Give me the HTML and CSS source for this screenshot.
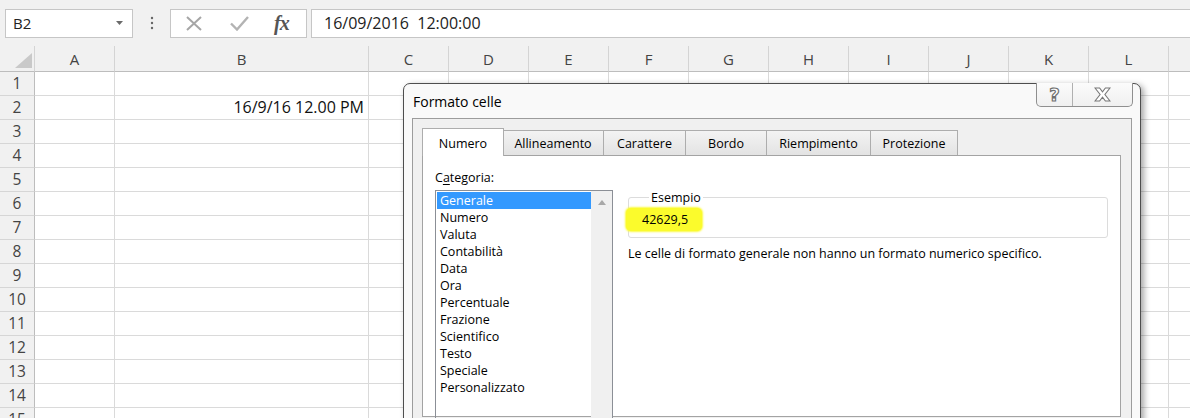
FILE: index.html
```html
<!DOCTYPE html>
<html lang="it">
  <head>
    <meta charset="UTF-8" />
    <title>Formato celle</title>
    <link rel="stylesheet" href="styles.css">
  </head>
  <body>
    <!-- Formula bar -->
    <div class="formula-bar">
      <div class="name-box">
        <span>B2</span>
        <svg class="caret" width="7" height="4" viewBox="0 0 7 4"><path d="M0 0h7L3.5 4z" fill="#6a6a6a"/></svg>
      </div>
      <svg class="grip" width="4" height="14" viewBox="0 0 4 14">
        <circle cx="2" cy="2" r="1.2" fill="#666"/>
        <circle cx="2" cy="7" r="1.2" fill="#666"/>
        <circle cx="2" cy="12" r="1.2" fill="#666"/>
      </svg>
      <div class="fx-buttons">
        <svg class="icon-cancel" width="18" height="15" viewBox="0 0 18 15"><path d="M2 1l14 13M16 1L2 14" stroke="#a6a6a6" stroke-width="2" fill="none"/></svg>
        <svg class="icon-enter" width="19" height="15" viewBox="0 0 19 15"><path d="M1 7.5l6 6L18 1" stroke="#b3b3b3" stroke-width="2.4" fill="none"/></svg>
        <span class="fx">fx</span>
      </div>
      <div class="formula-input">16/09/2016  12:00:00</div>
    </div>

    <!-- Worksheet -->
    <div class="sheet">
      <div class="corner"><span class="corner-tri"></span></div>
      <div class="ch">A</div><div class="ch">B</div><div class="ch">C</div><div class="ch">D</div><div class="ch">E</div><div class="ch">F</div><div class="ch">G</div><div class="ch">H</div><div class="ch">I</div><div class="ch">J</div><div class="ch">K</div><div class="ch">L</div><div class="ch"></div>

      <div class="rh">1</div><i></i><i></i><i></i><i></i><i></i><i></i><i></i><i></i><i></i><i></i><i></i><i></i><i></i>
      <div class="rh">2</div><i></i><i class="value">16/9/16 12.00 PM</i><i></i><i></i><i></i><i></i><i></i><i></i><i></i><i></i><i></i><i></i><i></i>
      <div class="rh">3</div><i></i><i></i><i></i><i></i><i></i><i></i><i></i><i></i><i></i><i></i><i></i><i></i><i></i>
      <div class="rh">4</div><i></i><i></i><i></i><i></i><i></i><i></i><i></i><i></i><i></i><i></i><i></i><i></i><i></i>
      <div class="rh">5</div><i></i><i></i><i></i><i></i><i></i><i></i><i></i><i></i><i></i><i></i><i></i><i></i><i></i>
      <div class="rh">6</div><i></i><i></i><i></i><i></i><i></i><i></i><i></i><i></i><i></i><i></i><i></i><i></i><i></i>
      <div class="rh">7</div><i></i><i></i><i></i><i></i><i></i><i></i><i></i><i></i><i></i><i></i><i></i><i></i><i></i>
      <div class="rh">8</div><i></i><i></i><i></i><i></i><i></i><i></i><i></i><i></i><i></i><i></i><i></i><i></i><i></i>
      <div class="rh">9</div><i></i><i></i><i></i><i></i><i></i><i></i><i></i><i></i><i></i><i></i><i></i><i></i><i></i>
      <div class="rh">10</div><i></i><i></i><i></i><i></i><i></i><i></i><i></i><i></i><i></i><i></i><i></i><i></i><i></i>
      <div class="rh">11</div><i></i><i></i><i></i><i></i><i></i><i></i><i></i><i></i><i></i><i></i><i></i><i></i><i></i>
      <div class="rh">12</div><i></i><i></i><i></i><i></i><i></i><i></i><i></i><i></i><i></i><i></i><i></i><i></i><i></i>
      <div class="rh">13</div><i></i><i></i><i></i><i></i><i></i><i></i><i></i><i></i><i></i><i></i><i></i><i></i><i></i>
      <div class="rh">14</div><i></i><i></i><i></i><i></i><i></i><i></i><i></i><i></i><i></i><i></i><i></i><i></i><i></i>
      <div class="rh">15</div><i></i><i></i><i></i><i></i><i></i><i></i><i></i><i></i><i></i><i></i><i></i><i></i><i></i>
    </div>

    <!-- Format cells dialog -->
    <div class="dialog">
      <div class="dialog-title">
        <span>Formato celle</span>
        <div class="caption-buttons">
          <div class="cap-btn help">?</div>
          <div class="cap-btn close">
            <svg width="17" height="15" viewBox="0 0 17 15"><path d="M1 1h4.6l2.9 3.8L11.4 1H16l-5.1 6.5L16 14h-4.6l-2.9-3.8L5.6 14H1l5.1-6.5z" fill="#fff" stroke="#777" stroke-width="1.1"/></svg>
          </div>
        </div>
      </div>

      <div class="dialog-body">
        <div class="tabs">
          <div class="tab active" style="width: 82px">Numero</div>
          <div class="tab" style="width: 101px">Allineamento</div>
          <div class="tab" style="width: 83px">Carattere</div>
          <div class="tab" style="width: 82px">Bordo</div>
          <div class="tab" style="width: 105px">Riempimento</div>
          <div class="tab" style="width: 88px">Protezione</div>
        </div>

        <div class="tab-page">
          <div class="category-col">
            <div class="field-label">C<u>a</u>tegoria:</div>
            <div class="listbox">
              <ul class="list-items">
                <li class="selected">Generale</li>
                <li>Numero</li>
                <li>Valuta</li>
                <li>Contabilità</li>
                <li>Data</li>
                <li>Ora</li>
                <li>Percentuale</li>
                <li>Frazione</li>
                <li>Scientifico</li>
                <li>Testo</li>
                <li>Speciale</li>
                <li>Personalizzato</li>
              </ul>
              <div class="scrollbar">
                <svg width="8" height="5" viewBox="0 0 8 5"><path d="M0 5h8L4 0z" fill="#a8a8a8"/></svg>
              </div>
            </div>
          </div>

          <div class="detail-col">
            <fieldset class="sample">
              <legend>Esempio</legend>
              <span class="sample-value">42629,5</span>
            </fieldset>
            <p class="hint">Le celle di formato generale non hanno un formato numerico specifico.</p>
          </div>
        </div>
      </div>
    </div>
  </body>
</html>
```

FILE: styles.css
```css
body {
  margin: 0;
  width: 1190px;
  height: 418px;
  overflow: hidden;
  position: relative;
  background-color: #fff;
  font-family: "Open Sans", "Noto Sans", sans-serif;
  color: #000;
}

/* Formula bar */
.formula-bar {
  display: flex;
  align-items: center;
  height: 46px;
  padding: 0 0 0 5px;
  box-sizing: border-box;
  background-color: #f1f1f1;
}

.name-box {
  width: 128px;
  height: 29px;
  box-sizing: border-box;
  border: 1px solid #c6c6c6;
  background: #fff;
  display: flex;
  align-items: center;
  justify-content: space-between;
  padding: 0 9px 0 7px;
  font-size: 15px;
  color: #222;
}

.grip {
  margin: 0 16px 0 17px;
}

.fx-buttons {
  width: 137px;
  height: 29px;
  box-sizing: border-box;
  border: 1px solid #c6c6c6;
  background: #fff;
  display: flex;
  align-items: center;
  padding-left: 14px;
}
.icon-enter {
  margin-left: 27px;
}
.fx {
  margin-left: 25px;
  font-family: "Liberation Serif", serif;
  font-style: italic;
  font-weight: bold;
  font-size: 20px;
  color: #555;
  letter-spacing: -1px;
}

.formula-input {
  flex: 1;
  height: 29px;
  box-sizing: border-box;
  margin-left: 4px;
  border: 1px solid #c6c6c6;
  border-right: none;
  background: #fff;
  padding-left: 12px;
  font-size: 16px;
  line-height: 27px;
  color: #222;
  white-space: pre;
}

/* Worksheet grid */
.sheet {
  display: grid;
  grid-template-columns: 35px 80px 254px repeat(11, 80px);
  grid-template-rows: 26px;
  grid-auto-rows: 24px;
}

.corner,
.ch {
  background-color: #f1f1f1;
  border-bottom: 1px solid #bdbdbd;
  border-right: 1px solid #d4d4d4;
}
.corner {
  display: flex;
  justify-content: flex-end;
  align-items: flex-end;
  padding: 0 2px 3px 0;
}
.corner-tri {
  width: 0;
  height: 0;
  border-left: 17px solid transparent;
  border-bottom: 15px solid #c9c9c9;
}
.ch {
  text-align: center;
  font-size: 15px;
  line-height: 26px;
  color: #444;
}

.rh {
  background-color: #f1f1f1;
  border-right: 1px solid #bdbdbd;
  border-bottom: 1px solid #d6d6d6;
  text-align: center;
  font-size: 15.5px;
  line-height: 23px;
  color: #444;
}

.sheet i {
  display: block;
  border-right: 1px solid #dadada;
  border-bottom: 1px solid #dadada;
  font-style: normal;
}
.sheet i.value {
  text-align: right;
  padding-right: 4px;
  font-size: 16px;
  line-height: 23px;
  color: #111;
}

/* Dialog */
.dialog {
  position: absolute;
  left: 403px;
  top: 83px;
  width: 738px;
  height: 380px;
  box-sizing: border-box;
  border: 1px solid #4e4e4e;
  border-radius: 7px 7px 0 0;
  background-color: #f9f9f9;
  padding: 0 8px;
  box-shadow: 3px 2px 6px rgba(0, 0, 0, 0.35);
  font-size: 12.5px;
}

.dialog-title {
  display: flex;
  height: 34px;
  align-items: flex-start;
}
.dialog-title span {
  font-size: 14px;
  margin: 8px 0 0 1px;
}

.caption-buttons {
  margin: -1px -1px 0 auto;
  display: flex;
  height: 24px;
  box-sizing: border-box;
  border: 1px solid #8f8f8f;
  border-top: none;
  border-radius: 0 0 5px 5px;
  background: linear-gradient(#fbfbfb, #f0f0f0);
}
.cap-btn {
  display: flex;
  align-items: center;
  justify-content: center;
}
.cap-btn.help {
  width: 35px;
  border-right: 1px solid #b0b0b0;
  font-family: "DejaVu Sans", sans-serif;
  font-weight: bold;
  font-size: 18px;
  color: #fff;
  -webkit-text-stroke: 1.2px #707070;
}
.cap-btn.close {
  width: 59px;
}

.dialog-body {
  height: 300px;
  border: 1px solid #9c9c9c;
  border-bottom: none;
  background-color: #f0f0f0;
  padding: 9px 10px 0 9px;
}

.tabs {
  display: flex;
  align-items: flex-end;
  height: 27px;
  position: relative;
  z-index: 1;
}
.tab {
  height: 25px;
  box-sizing: border-box;
  border: 1px solid #adadad;
  border-bottom: none;
  margin-left: -1px;
  background: linear-gradient(#f3f3f3, #e3e3e3);
  text-align: center;
  line-height: 26px;
  color: #000;
}
.tab:first-child {
  margin-left: 0;
}
.tab.active {
  height: 28px;
  margin-bottom: -1px;
  background: #fff;
  line-height: 29px;
  position: relative;
  z-index: 2;
}
.tab.active + .tab {
  border-left: none;
}

.tab-page {
  height: 260px;
  border: 1px solid #a3a3a3;
  background-color: #fff;
  display: flex;
}

.category-col {
  margin-left: 12px;
  width: 178px;
}
.field-label {
  margin-top: 13px;
  line-height: 17px;
}
.field-label u {
  text-underline-offset: 2px;
}

.listbox {
  margin-top: 4px;
  height: 240px;
  border: 1px solid #8b8f96;
  padding: 1px 0 0 1px;
  display: flex;
}
.list-items {
  list-style: none;
  margin: 0;
  padding: 0;
  width: 154px;
}
.list-items li {
  line-height: 17px;
  padding-left: 3px;
}
.list-items li.selected {
  background-color: #3399ff;
  color: #fff;
}
.scrollbar {
  flex: 1;
  margin-top: -1px;
  background-color: #f0f0f0;
  display: flex;
  justify-content: center;
  padding-top: 9px;
  align-items: flex-start;
}

.detail-col {
  margin-left: 13px;
}
.sample {
  margin: 33px 0 0 2px;
  width: 480px;
  box-sizing: border-box;
  border: 1px solid #dcdcdc;
  border-radius: 3px;
  padding: 2px 0 6px 13px;
}
.sample legend {
  padding: 0 2px;
  margin-left: 7px;
  line-height: 17px;
}
.sample-value {
  display: inline-block;
  margin-left: -16px;
  padding: 3px 14px 3px 16px;
  line-height: 17px;
  background-color: #fbfb2c;
  border-radius: 5px;
  box-shadow: 0 0 2px 1px #fbfb40;
}

.hint {
  margin: 7px 0 0 2px;
  line-height: 17px;
}
```
